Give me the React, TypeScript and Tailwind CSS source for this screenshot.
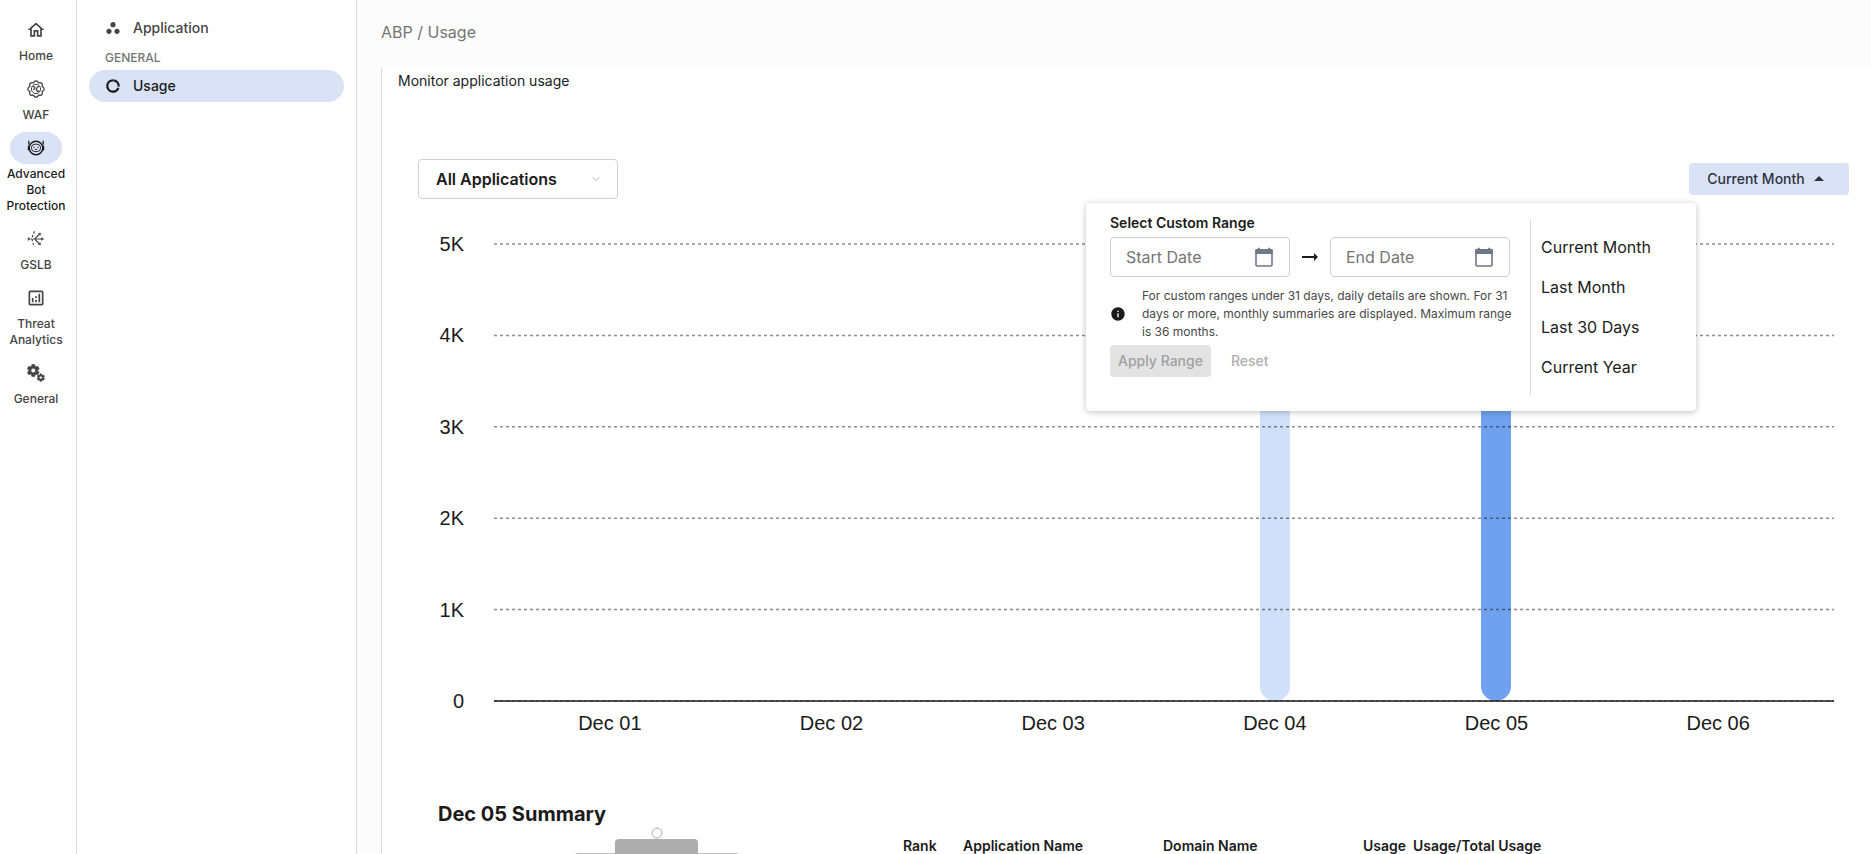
import React, { useState } from 'react';
import {
  MdOutlineHome,
  MdOutlineAnalytics,
  MdWorkspaces,
  MdArrowDropUp,
  MdArrowRightAlt,
  MdInfo,
} from 'react-icons/md';
import { ChevronDown } from 'lucide-react';

// Custom icons
const WafIcon = () => (
  <svg viewBox="0 0 20 20" className="w-5 h-5" fill="none" stroke="currentColor" strokeWidth="1.3">
    <circle cx="10" cy="10" r="4.6" strokeWidth="1" />
    {[0, 45, 90, 135, 180, 225, 270, 315].map((deg) => (
      <path key={deg} d="M7.7 4.2 A2.3 2.3 0 1 1 12.3 4.2" transform={`rotate(${deg} 10 10)`} />
    ))}
    <path d="M6.6 7.4l2 .6.2 1.6-1.6 1.2M13.4 7.4l-2.2.8-.8 2 1 2.2 2-.6" />
  </svg>
);

const BotIcon = () => (
  <svg viewBox="0 0 20 20" className="w-5 h-5" fill="none" stroke="currentColor" strokeWidth="1.4">
    <circle cx="10" cy="10" r="6.8" />
    <rect x="5.4" y="6.2" width="9.2" height="7.4" rx="3.6" strokeWidth=".9" />
    <path d="M2.8 2.8v4M17.2 2.8v4" strokeWidth="1.3" />
    <path d="M2.8 7.8v4.4M17.2 7.8v4.4" strokeWidth="2" />
    <path d="M7.4 9.3h1.2M11.4 9.3h1.2M8.9 11.2q1.1 .9 2.2 0" strokeWidth="1" />
  </svg>
);

const GslbIcon = () => (
  <svg viewBox="0 0 20 20" className="w-5 h-5" fill="none" stroke="currentColor" strokeWidth="1.1">
    <path d="M8.5 10h8M8.5 10l5.2-5M8.5 10l5.2 5" />
    <path d="M8.6 2.4Q3.8 10 8.6 17.6" strokeDasharray="2.4 1.6" />
    <path d="M2.4 10h6" strokeDasharray="1.4 .8" />
    <path d="M2.2 8.4l2 1.6-2 1.6zM15.4 8.6l2.4 1.4-2.4 1.4zM12.2 4.4l2.6-.4-.6 2.4zM12.2 15.6l2.6.4-.6-2.4z" fill="currentColor" strokeWidth=".4" />
  </svg>
);

const gearPath =
  'M19.14 12.94c.04-.3.06-.61.06-.94 0-.32-.02-.64-.07-.94l2.03-1.58c.18-.14.23-.41.12-.61l-1.92-3.32c-.12-.22-.37-.29-.59-.22l-2.39.96c-.5-.38-1.03-.7-1.62-.94l-.36-2.54c-.04-.24-.24-.41-.48-.41h-3.84c-.24 0-.43.17-.47.41l-.36 2.54c-.59.24-1.13.57-1.62.94l-2.39-.96c-.22-.08-.47 0-.59.22L2.74 8.87c-.12.21-.08.47.12.61l2.03 1.58c-.05.3-.09.63-.09.94s.02.64.07.94l-2.03 1.58c-.18.14-.23.41-.12.61l1.92 3.32c.12.22.37.29.59.22l2.39-.96c.5.38 1.03.7 1.62.94l.36 2.54c.05.24.24.41.48.41h3.84c.24 0 .44-.17.47-.41l.36-2.54c.59-.24 1.13-.56 1.62-.94l2.39.96c.22.08.47 0 .59-.22l1.92-3.32c.12-.22.07-.47-.12-.61l-2.01-1.58zM12 15.6c-1.98 0-3.6-1.62-3.6-3.6s1.62-3.6 3.6-3.6 3.6 1.62 3.6 3.6-1.62 3.6-3.6 3.6z';

const GearsIcon = () => (
  <svg viewBox="0 0 20 20" className="w-5 h-5" fill="currentColor">
    <path d={gearPath} transform="translate(-.3 0) scale(.63)" stroke="currentColor" />
    <path d={gearPath} transform="translate(10 9.8) scale(.4)" stroke="currentColor" />
  </svg>
);

const UsageIcon = () => (
  <svg viewBox="0 0 16 16" className="w-4 h-4" fill="none" stroke="currentColor" strokeWidth="2.2">
    <circle cx="8" cy="8" r="5.7" strokeDasharray="8.8 1.4 24.4 1.2" transform="rotate(-84 8 8)" />
  </svg>
);

const CalendarIcon = () => (
  <svg viewBox="0 0 24 24" className="w-6 h-6 text-[#707888]">
    <rect x="4" y="5" width="16" height="16" rx="1" fill="none" stroke="currentColor" strokeWidth="1.6" />
    <path d="M3.2 5q0-1 1-1h15.6q1 0 1 1v4H3.2zM5.8 2.8h2v2h-2zM16.2 2.8h2v2h-2z" fill="currentColor" />
  </svg>
);

const navItems = [
  { label: 'Home', icon: <MdOutlineHome className="w-5 h-5" /> },
  { label: 'WAF', icon: <WafIcon /> },
  { label: 'Advanced Bot Protection', icon: <BotIcon />, active: true },
  { label: 'GSLB', icon: <GslbIcon /> },
  { label: 'Threat Analytics', icon: <MdOutlineAnalytics className="w-5 h-5" /> },
  { label: 'General', icon: <GearsIcon /> },
];

const ticks = ['5K', '4K', '3K', '2K', '1K', '0'];

const days = [
  { label: 'Dec 01', value: 0 },
  { label: 'Dec 02', value: 0 },
  { label: 'Dec 03', value: 0 },
  { label: 'Dec 04', value: 4100, color: 'bg-[#d0e0fa]' },
  { label: 'Dec 05', value: 4300, color: 'bg-[#70a1ee]' },
  { label: 'Dec 06', value: 0 },
];

const presets = ['Current Month', 'Last Month', 'Last 30 Days', 'Current Year'];

const DateField = ({ label, value, onChange }: any) => (
  <div className="flex items-center w-[180px] h-10 pl-[15px] pr-[13px] border border-[#cfcfcf] rounded">
    <input
      type="text"
      aria-label={label}
      placeholder={label}
      value={value}
      onChange={(e) => onChange(e.target.value)}
      className="flex-1 min-w-0 text-base outline-none placeholder:text-[#757575]"
    />
    <button type="button" aria-label={`Pick ${label}`}>
      <CalendarIcon />
    </button>
  </div>
);

const RangePopover = ({ onSelect }: { onSelect: (range: string) => void }) => {
  const [start, setStart] = useState('');
  const [end, setEnd] = useState('');
  const ready = start !== '' && end !== '';

  return (
    <div className="absolute top-11 right-[153px] z-10 flex w-[610px] bg-white rounded py-4 pl-6 shadow-[0_1px_6px_rgba(0,0,0,0.25)]">
      <div className="w-[421px] h-44 border-r border-[#dcdcdc]">
        <div className="-mt-1 text-sm leading-4 font-semibold">Select Custom Range</div>
        <div className="flex items-center mt-1.5">
          <DateField label="Start Date" value={start} onChange={setStart} />
          <div className="w-10 flex justify-center">
            <MdArrowRightAlt className="w-6 h-6" />
          </div>
          <DateField label="End Date" value={end} onChange={setEnd} />
        </div>
        <div className="flex items-center mt-2.5">
          <MdInfo className="w-4 h-4 shrink-0" />
          <p className="pl-4 pr-3 text-xs leading-[18px] text-[#474747]">
            For custom ranges under 31 days, daily details are shown. For 31 days or more, monthly summaries are displayed. Maximum range is 36 months.
          </p>
        </div>
        <div className="flex items-center mt-1">
          <button
            type="button"
            disabled={!ready}
            className="h-8 px-2 rounded bg-[#e3e3e3] text-[#a1a1a1] text-sm font-medium"
          >
            Apply Range
          </button>
          <button type="button" disabled={!ready} className="h-8 px-5 text-sm font-medium text-[#b0b0b0]">
            Reset
          </button>
        </div>
      </div>
      <div className="flex flex-col pt-2 pl-[10px]">
        {presets.map((preset) => (
          <button key={preset} type="button" onClick={() => onSelect(preset)} className="h-10 text-left text-base">
            {preset}
          </button>
        ))}
      </div>
    </div>
  );
};

const UsageChart = () => (
  <div className="mt-[45px] pl-5 pr-[15px] font-['Liberation_Sans',Arial,sans-serif] text-xl">
    <div className="flex">
      {/* Y axis */}
      <div className="w-[26px] h-[457px] flex flex-col justify-between">
        {ticks.map((tick) => (
          <div key={tick} className="h-0 flex items-center justify-end">
            {tick}
          </div>
        ))}
      </div>
      {/* Plot area */}
      <div className="relative flex-1 ml-[30px] h-[457px]">
        <div className="grid grid-cols-6 h-full px-[5px]">
          {days.map((day) => (
            <div key={day.label} className="flex items-end justify-center">
              {day.value > 0 && (
                <div
                  className={`w-[30px] rounded-full ${day.color}`}
                  style={{ height: `${(day.value / 5000) * 100}%` }}
                />
              )}
            </div>
          ))}
        </div>
        <svg className="absolute inset-0 w-full h-full overflow-visible">
          {ticks.map((tick, i) => (
            <line
              key={tick}
              x1="0"
              x2="100%"
              y1={`${i * 20}%`}
              y2={`${i * 20}%`}
              stroke="#000"
              strokeOpacity="0.45"
              strokeWidth="1.5"
              strokeDasharray="3 3"
            />
          ))}
          <line x1="0" x2="100%" y1="100%" y2="100%" stroke="#1b1b1b" strokeWidth="1.5" />
        </svg>
      </div>
    </div>
    <div className="grid grid-cols-6 ml-14 px-[5px] mt-2 leading-7 text-center">
      {days.map((day) => (
        <div key={day.label}>{day.label}</div>
      ))}
    </div>
  </div>
);

const SummaryFigure = () => (
  <svg width="168" height="60" viewBox="0 0 168 60" fill="none" stroke="#adadad">
    <circle cx="84" cy="6" r="5" fill="#fff" />
    <path d="M42 60V16q0-4 4-4h75q4 0 4 4v44z" fill="#adadad" stroke="none" />
    <path d="M1 60v-29q0-4 4-4h158q4 0 4 4v29" strokeWidth="1.5" />
  </svg>
);

export default function App() {
  const [range, setRange] = useState('Current Month');
  const [open, setOpen] = useState(true);

  return (
    <div className="flex h-screen overflow-hidden bg-white text-[#1b1b1b] font-['Inter',sans-serif]">
      {/* Primary navigation */}
      <nav className="w-[77px] shrink-0 border-r border-[#dedede] flex flex-col items-center gap-[9px] pt-[14px] pr-1">
        {navItems.map((item) => (
          <a
            key={item.label}
            href="#"
            className={`flex flex-col items-center gap-0.5 text-xs font-medium text-center ${
              item.active ? 'text-[#1b1b1b]' : 'text-[#444]'
            }`}
          >
            <span className={`flex items-center justify-center w-[52px] h-8 rounded-full ${item.active ? 'bg-[#dae2f5]' : ''}`}>
              {item.icon}
            </span>
            <span className="w-[66px]">{item.label}</span>
          </a>
        ))}
      </nav>

      {/* Secondary navigation */}
      <nav className="w-[280px] shrink-0 border-r border-[#dedede] pt-3 pl-3 pr-3 text-sm font-medium">
        <a href="#" className="flex items-center gap-3 h-8 px-4 rounded-full text-[#444]">
          <MdWorkspaces className="w-4 h-4" />
          Application
        </a>
        <div className="h-[26px] px-4 text-xs leading-7 text-[#757575]">GENERAL</div>
        <a href="#" className="flex items-center gap-3 h-8 px-4 rounded-full bg-[#dae2f5]">
          <UsageIcon />
          Usage
        </a>
      </nav>

      {/* Content */}
      <main className="flex-1 min-w-0 bg-[#fcfcfc] pl-6">
        <header className="h-[68px] pt-5 text-base leading-6 text-[#757575]">ABP / Usage</header>
        <div className="bg-white border-l border-[#dedede] min-h-full">
          <h1 className="pl-4 pt-1 text-sm leading-[18px]">Monitor application usage</h1>

          <div className="pl-9 pr-[22px] pt-[69px]">
            <div className="relative flex items-center justify-between">
              <div className="relative w-[200px]">
                <select
                  aria-label="Application"
                  className="appearance-none w-full h-10 pl-[17px] pr-9 border border-[#cfcfcf] rounded bg-white text-base font-semibold"
                >
                  <option>All Applications</option>
                </select>
                <ChevronDown className="absolute right-4 top-[14px] w-3 h-3 text-[#b5b5b5] pointer-events-none" />
              </div>
              <button
                type="button"
                onClick={() => setOpen(!open)}
                className="flex items-center justify-center w-40 h-8 rounded bg-[#dae2f5] text-sm font-medium text-[#2b3340]"
              >
                {range}
                <MdArrowDropUp className="w-6 h-6 ml-0.5" />
              </button>
              {open && <RangePopover onSelect={setRange} />}
            </div>

            <UsageChart />

            <div className="mt-16 pl-5">
              <h2 className="text-xl leading-[26px] font-bold">Dec 05 Summary</h2>
              <div className="flex items-start">
                <div className="w-[465px] flex justify-center pr-7">
                  <SummaryFigure />
                </div>
                <table className="text-sm leading-4 font-semibold table-fixed w-[660px]">
                  <thead>
                    <tr className="h-[38px] text-left">
                      <th className="w-[60px] font-semibold">Rank</th>
                      <th className="w-[200px] font-semibold">Application Name</th>
                      <th className="w-[200px] font-semibold">Domain Name</th>
                      <th className="w-[50px] font-semibold">Usage</th>
                      <th className="font-semibold">Usage/Total Usage</th>
                    </tr>
                  </thead>
                </table>
              </div>
            </div>
          </div>
        </div>
      </main>
    </div>
  );
}
